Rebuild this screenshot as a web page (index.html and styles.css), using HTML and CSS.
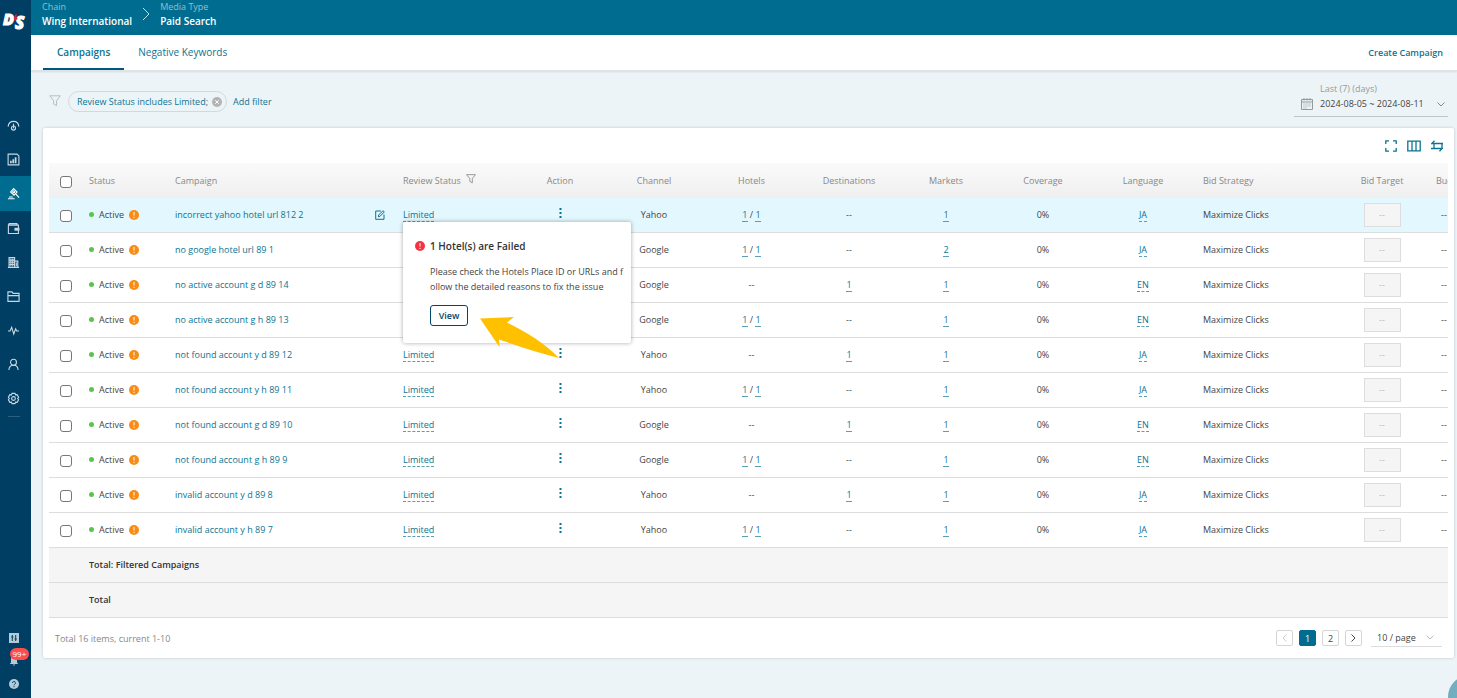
FILE: index.html
```html
<!DOCTYPE html>
<html lang="en">
<head>
  <meta charset="UTF-8">
  <title>Paid Search - Campaigns</title>
  <meta name="viewport" content="width=device-width, initial-scale=1.0">
  <link rel="stylesheet" href="styles.css">
</head>
<body>

  <!-- Sidebar -->
  <nav class="sidebar" aria-label="Main">
    <a class="logo" href="#" aria-label="Home">
      <svg viewBox="0 0 28 24" width="28" height="24">
        <text class="logo-letter" x="2" y="16" font-size="16">D</text>
        <text class="logo-letter" x="14" y="20" font-size="17">S</text>
        <path d="M14 6l1.800-1.200-.4 2.800 1.200 2.400-3 2-.8-2.600z" fill="#e8202f"/>
      </svg>
    </a>

    <div class="side-menu">
      <a class="side-item" href="#" aria-label="Dashboard">
        <svg viewBox="0 0 14 14"><path d="M1.200 8.200C1.500 4.600 4 2.600 7 2.600s5.500 2 5.800 5.600"/><circle cx="7" cy="9.800" r="2.200"/><path d="M7 5v5"/></svg>
      </a>
      <a class="side-item" href="#" aria-label="Reports">
        <svg viewBox="0 0 14 14"><path d="M1.200 1.200h9.600l2 2v9.600H1.200z"/><path class="fill" d="M3.300 8.400h1.800v2.600H3.300zM5.800 6.600h1.800V11H5.800zM8.300 4.500h1.900V11H8.300z"/></svg>
      </a>
      <a class="side-item active" href="#" aria-label="Bidding">
        <svg viewBox="0 0 14 14"><path d="M7.200 1.800l3.600 3.600-3.200 3.400L3.900 5.300z"/><circle cx="7.300" cy="5.200" r="1.100"/><path d="M9.400 7.400l3.600 4M1 12.700h7.200M2.200 10.800h4"/></svg>
      </a>
      <a class="side-item" href="#" aria-label="Budget">
        <svg viewBox="0 0 14 14"><path d="M1.500 3.400v9h10.800v-9zM1.500 3.400l.8-1.600h8.400v1.600"/><path class="fill" d="M8 6.200h5.400v3.200H8z"/></svg>
      </a>
      <a class="side-item" href="#" aria-label="Hotels">
        <svg viewBox="0 0 14 14"><path d="M2.200 12V1.800h6V12M8.200 5.500h3.400V12M1 12.300h12M4.200 3v8M6.200 3v8M2.500 4.400h5.500M2.500 6.800h5.500M2.500 9.200h5.500M10 7v4"/></svg>
      </a>
      <a class="side-item" href="#" aria-label="Files">
        <svg viewBox="0 0 14 14"><path d="M1 12.300V2h4.400l1.200 1.600H13v8.700zM1 6h12"/></svg>
      </a>
      <a class="side-item" href="#" aria-label="Activity">
        <svg viewBox="0 0 14 14"><path d="M1 7.500h2.300L5 3.500l2.300 7.300 2-5.600 1.200 2.300H13"/></svg>
      </a>
      <a class="side-item" href="#" aria-label="Users">
        <svg viewBox="0 0 14 14"><circle cx="7" cy="4.600" r="3.200"/><path d="M2 13c.2-3.300 2-5.200 5-5.200s4.800 1.900 5 5.200"/></svg>
      </a>
      <a class="side-item" href="#" aria-label="Settings">
        <svg viewBox="0 0 14 14"><path d="M5.400 1.500h3.200l.6 1.600 1.700-.2 1.600 2.800L11.500 7l1 1.300-1.600 2.800-1.700-.2-.6 1.600H5.400l-.6-1.600-1.700.2-1.600-2.800L2.500 7l-1-1.300 1.600-2.800 1.700.2z"/><circle cx="7" cy="7" r="2"/></svg>
      </a>
      <span class="side-line"></span>
    </div>

    <div class="side-bottom">
      <a href="#" aria-label="Controls">
        <svg viewBox="0 0 10 10" width="10" height="10"><path d="M0 0h10v10H0z" fill="#b3cad8"/><path d="M3.300 2v6M6.700 2v6M2.200 4h2.200M5.600 6h2.200" stroke="#003e64" fill="none"/></svg>
      </a>
      <a class="bell" href="#" aria-label="Notifications">
        <svg viewBox="0 0 10 10" width="10" height="10"><path d="M5 0a3 3 0 0 0-3 3v3.500L.8 8h8.400L8 6.500V3a3 3 0 0 0-3-3zM3.800 8.600h2.400L5 10z" fill="#b3cad8"/></svg>
        <span class="badge">99+</span>
      </a>
      <a href="#" aria-label="Help">
        <svg viewBox="0 0 10 10" width="10" height="10"><circle cx="5" cy="5" r="5" fill="#b3cad8"/><path d="M3.500 4a1.500 1.500 0 1 1 2.200 1.300c-.5.300-.7.500-.7 1M5 7.200v1" stroke="#003e64" fill="none"/></svg>
      </a>
    </div>
  </nav>

  <div class="page">
    <header class="topbar">
      <div class="crumb"><span class="crumb-label">Chain</span><strong>Wing International</strong></div>
      <svg class="crumb-arrow" viewBox="0 0 8 14" width="8" height="14"><path d="M1 1l6 6-6 6"/></svg>
      <div class="crumb"><span class="crumb-label">Media Type</span><strong>Paid Search</strong></div>
    </header>

    <div class="tabs">
      <a class="tab selected" href="#">Campaigns</a>
      <a class="tab" href="#">Negative Keywords</a>
      <a class="create" href="#">Create Campaign</a>
    </div>

    <main class="content">
      <div class="filters">
        <svg class="funnel" viewBox="0 0 12 12" width="12" height="12"><path d="M.7.8h10.600L7.600 5.600v5L4.600 9V5.600z"/></svg>
        <div class="chip">
          Review Status includes Limited;
          <button class="chip-close" aria-label="Remove filter">
            <svg viewBox="0 0 10 10" width="10" height="10"><circle cx="5" cy="5" r="5" fill="#b4b4b4"/><path d="M3.200 3.200l3.600 3.600M6.800 3.200L3.200 6.800" stroke="#fff"/></svg>
          </button>
        </div>
        <a class="add-filter" href="#">Add filter</a>
        <button class="date-range">
          <svg class="calendar" viewBox="0 0 12 12" width="12" height="12"><path d="M.5 1.500h11v10H.5zM.5 4h11M3 0v2.500M6 0v2.500M9 0v2.500"/><path d="M2.500 6h1M4.500 6h1M6.500 6h1M8.500 6h1M2.500 8h1M4.500 8h1M6.500 8h1M8.500 8h1M2.500 10h1M4.500 10h1"/></svg>
          <span class="date-text"><span class="date-label">Last (7) (days)</span><span>2024-08-05 ~ 2024-08-11</span></span>
          <svg class="caret" viewBox="0 0 8 5" width="8" height="5"><path d="M.5.5L4 4 7.500.5"/></svg>
        </button>
      </div>

      <section class="card">
        <div class="toolbar">
          <button aria-label="Full screen"><svg viewBox="0 0 12 12" width="12" height="12"><path d="M.8 4V.8H4M8 .8h3.200V4M11.200 8v3.200H8M4 11.200H.8V8"/></svg></button>
          <button aria-label="Columns"><svg viewBox="0 0 14 12" width="14" height="12"><path d="M.8 1.200h12.400v9.600H.8zM5 1.200v9.600M9 1.200v9.600"/></svg></button>
          <button aria-label="Row height"><svg viewBox="0 0 12 12" width="12" height="12"><path d="M3.500.8L.8 3.500H12M3 3.500v5M11 3.500v5M0 8.500h11.200l-2.700 2.700"/></svg></button>
        </div>

        <div class="table-wrap">
          <table class="grid">
            <colgroup>
              <col class="c-check"><col class="c-status"><col class="c-campaign"><col class="c-review">
              <col class="c-action"><col class="c-channel"><col class="c-hotels"><col class="c-dest">
              <col class="c-markets"><col class="c-coverage"><col class="c-language"><col class="c-strategy">
              <col class="c-target"><col class="c-budget">
            </colgroup>
            <thead>
              <tr>
                <th class="mid"><input type="checkbox" aria-label="Select all"></th>
                <th>Status</th>
                <th>Campaign</th>
                <th>Review Status <svg class="th-funnel" viewBox="0 0 12 12" width="10" height="10"><path d="M.7.8h10.600L7.600 5.600v5L4.600 9V5.600z"/></svg></th>
                <th class="mid">Action</th>
                <th class="mid">Channel</th>
                <th class="mid">Hotels</th>
                <th class="mid">Destinations</th>
                <th class="mid">Markets</th>
                <th class="mid">Coverage</th>
                <th class="mid">Language</th>
                <th>Bid Strategy</th>
                <th class="mid">Bid Target</th>
                <th>Budget</th>
              </tr>
            </thead>
            <tbody id="rows"></tbody>
            <tfoot>
              <tr><td></td><td colspan="13">Total: Filtered Campaigns</td></tr>
              <tr><td></td><td colspan="13">Total</td></tr>
            </tfoot>
          </table>

          <!-- Review status details -->
          <div class="popover" role="dialog" aria-labelledby="popTitle">
            <h2 class="pop-title" id="popTitle">
              <svg viewBox="0 0 10 10" width="10" height="10"><circle cx="5" cy="5" r="5" fill="#f5333f"/><path d="M5 2v3.500M5 6.800V8" stroke="#fff"/></svg>
              1 Hotel(s) are Failed
            </h2>
            <p class="pop-text">Please check the Hotels Place ID or URLs and follow the detailed reasons to fix the issue</p>
            <button class="view">View</button>
          </div>
          <svg class="pointer" viewBox="0 0 80 42" width="80" height="42"><path d="M0 1.500L34 0 27 5.500C45 14 66 27 79 41C58 36 38 29 19 22.500L19.500 30z" fill="#ffc000"/></svg>
        </div>

        <div class="pager">
          <span class="pager-info">Total 16 items, current 1-10</span>
          <button class="page-btn off" disabled aria-label="Previous page"><svg viewBox="0 0 5 8" width="5" height="8"><path d="M4.500.5L1 4l3.500 3.500"/></svg></button>
          <button class="page-btn current">1</button>
          <button class="page-btn">2</button>
          <button class="page-btn" aria-label="Next page"><svg viewBox="0 0 5 8" width="5" height="8"><path d="M.5.5L4 4 .5 7.500"/></svg></button>
          <div class="size">
            <select aria-label="Page size"><option>10 / page</option><option>20 / page</option></select>
            <svg class="caret" viewBox="0 0 8 5" width="8" height="5"><path d="M.5.5L4 4 7.500.5"/></svg>
          </div>
        </div>
      </section>
    </main>
  </div>

  <button class="chat" aria-label="Chat"></button>

  <script src="script.js"></script>
</body>
</html>
```
FILE: styles.css
```css
* {
  margin: 0;
  padding: 0;
  box-sizing: border-box;
}

body {
  font-family: 'Open Sans', 'Noto Sans', sans-serif;
  font-size: 9px;
  line-height: 15px;
  color: #444;
  background: #edf4f8;
  display: flex;
  min-height: 100vh;
}

a {
  color: #0b7492;
  text-decoration: none;
}

button, select {
  font: inherit;
  color: inherit;
  background: none;
  border: none;
  cursor: pointer;
}

svg {
  fill: none;
  flex: none;
}

/* SIDEBAR */
.sidebar {
  width: 31px;
  flex: none;
  background: #003e64;
  display: flex;
  flex-direction: column;
}

.logo {
  height: 108px;
  padding: 9px 0 0 1px;
}

.logo-letter {
  font-family: 'Open Sans', sans-serif;
  font-weight: 800;
  font-style: italic;
  fill: #fff;
  stroke: #fff;
  stroke-width: 1;
}

.side-menu {
  display: flex;
  flex-direction: column;
}

.side-item {
  height: 34px;
  padding-right: 4px;
  display: flex;
  align-items: center;
  justify-content: center;
}

.side-item.active {
  height: 35px;
  background: #006d90;
}

.side-item svg {
  width: 13px;
  height: 13px;
  stroke: #c8d8e2;
  stroke-width: 1.2;
}

.side-item.active svg {
  stroke: #fff;
}

.side-item .fill {
  fill: #c8d8e2;
  stroke: none;
}

.side-line {
  width: 12px;
  height: 1px;
  margin: 1px 0 0 8px;
  background: #2d607f;
}

.side-bottom {
  margin-top: auto;
  padding: 0 4px 9px 0;
  display: flex;
  flex-direction: column;
  align-items: center;
  gap: 13px;
}

.side-bottom a {
  height: 10px;
  display: flex;
}

.bell {
  position: relative;
}

.badge {
  position: absolute;
  left: 1px;
  top: -8px;
  padding: 0 3px;
  border-radius: 6px;
  background: #ff4d4f;
  color: #fff;
  font-size: 8px;
  line-height: 12px;
}

/* HEADER */
.page {
  flex: 1;
  min-width: 0;
}

.topbar {
  height: 35px;
  padding-left: 11px;
  background: #006d90;
  color: #fff;
  display: flex;
  gap: 10px;
}

.crumb {
  display: flex;
  flex-direction: column;
  font-size: 10px;
  line-height: 14px;
}

.crumb strong {
  font-weight: 600;
}

.crumb-label {
  font-size: 9px;
  color: #8fc0d0;
}

.crumb-arrow {
  margin-top: 7px;
  stroke: #c5dfe8;
}

.tabs {
  height: 36px;
  padding: 0 14px 0 12px;
  background: #fff;
  border-bottom: 1px solid #dde3e6;
  box-shadow: 0 1px 2px rgba(0, 0, 0, 0.1);
  display: flex;
  align-items: stretch;
}

.tab {
  padding: 0 14px;
  font-size: 10px;
  line-height: 35px;
}

.tab.selected {
  font-weight: 600;
  border-bottom: 2px solid #00587f;
}

.create {
  margin-left: auto;
  font-weight: 600;
  line-height: 36px;
}

/* FILTERS */
.content {
  padding: 10px 3px 0 12px;
}

.filters {
  height: 47px;
  padding: 0 6px;
  display: flex;
  align-items: flex-start;
}

.funnel {
  margin-top: 14px;
  stroke: #bbb;
}

.chip {
  height: 21px;
  margin: 10px 6px 0 7px;
  padding: 0 4px 0 8px;
  border: 1px solid #d2d9dc;
  border-radius: 11px;
  color: #0b7492;
  display: flex;
  align-items: center;
  gap: 4px;
}

.chip-close {
  display: flex;
}

.add-filter {
  margin-top: 13px;
}

.date-range {
  width: 154px;
  height: 36px;
  margin-left: auto;
  padding: 0 3px 0 7px;
  border-bottom: 1px solid #c0c5c8;
  text-align: left;
  display: flex;
  gap: 7px;
}

.calendar {
  margin-top: 17px;
  stroke: #999;
}

.date-text {
  display: flex;
  flex-direction: column;
  flex: 1;
}

.date-label {
  color: #999;
}

.caret {
  stroke: #888;
}

.date-range .caret {
  margin-top: 21px;
}

/* CARD */
.card {
  padding: 0 6px;
  background: #fff;
  border-radius: 2px;
  box-shadow: 0 0 3px rgba(0, 0, 0, 0.2);
}

.toolbar {
  height: 35px;
  padding: 0 5px;
  display: flex;
  align-items: center;
  justify-content: flex-end;
  gap: 10px;
}

.toolbar button {
  display: flex;
}

.toolbar svg {
  stroke: #0b7492;
  stroke-width: 1.3;
}

.table-wrap {
  position: relative;
  overflow: hidden;
}

.grid {
  width: 1480px;
  min-width: 100%;
  table-layout: fixed;
  border-collapse: separate;
  border-spacing: 0;
}

.c-check { width: 34px; }
.c-status { width: 86px; }
.c-campaign { width: 228px; }
.c-review { width: 115px; }
.c-action { width: 96px; }
.c-channel { width: 92px; }
.c-hotels { width: 103px; }
.c-dest { width: 92px; }
.c-markets { width: 102px; }
.c-coverage { width: 92px; }
.c-language { width: 108px; }
.c-strategy { width: 137px; }
.c-target { width: 96px; }

.grid th,
.grid td {
  height: 35px;
  padding: 0 6px;
  text-align: left;
  white-space: nowrap;
}

.grid th {
  font-weight: 400;
  color: #888;
}

.grid thead tr {
  background: linear-gradient(#fafafa, #efefef);
}

.grid td {
  padding-bottom: 1px;
  border-bottom: 1px solid #ddd;
}

.grid .mid {
  text-align: center;
}

.grid tfoot td {
  background: #f5f5f5;
  color: #333;
  font-weight: 600;
}

.grid tr.hovered td {
  background: #e3f7fe;
}

.grid input[type="checkbox"] {
  appearance: none;
  width: 12px;
  height: 12px;
  border: 1px solid #777;
  border-radius: 3px;
  background: #fff;
  vertical-align: middle;
}

.th-funnel {
  margin-left: 3px;
  stroke: #888;
}

.status,
.name {
  display: flex;
  align-items: center;
}

.dot {
  width: 5px;
  height: 5px;
  margin-right: 5px;
  border-radius: 50%;
  background: #5ac44c;
}

.warn {
  margin-left: 5px;
}

.name {
  justify-content: space-between;
  padding-right: 6px;
}

.edit {
  display: flex;
}

.edit svg {
  stroke: #0b7492;
}

.dashed {
  border-bottom: 1px dashed #5b9db2;
}

.solid {
  border-bottom: 1px solid #5b9db2;
}

.more svg {
  fill: #0b7492;
}

.target {
  width: 37px;
  height: 24px;
  border: 1px solid #ddd;
  background: #f5f5f5;
  color: #bbb;
  font: inherit;
  text-align: center;
}

.budget {
  padding-left: 5px;
}

/* POPOVER */
.popover {
  position: absolute;
  left: 354px;
  top: 59px;
  width: 228px;
  height: 121px;
  padding: 16px 6px 0 12px;
  background: #fff;
  border-radius: 2px;
  box-shadow: 0 0 4px rgba(0, 0, 0, 0.35);
}

.pop-title {
  font-size: 10px;
  line-height: 16px;
  font-weight: 600;
  color: #333;
  display: flex;
  align-items: center;
  gap: 5px;
}

.pop-text {
  margin: 10px 0 11px 15px;
  word-break: break-all;
}

.view {
  width: 38px;
  height: 21px;
  margin-left: 15px;
  border: 1px solid #00466e;
  border-radius: 3px;
  color: #00466e;
  font-weight: 600;
}

.pointer {
  position: absolute;
  left: 431px;
  top: 154px;
}

/* PAGER */
.pager {
  height: 40px;
  padding: 0 6px;
  display: flex;
  align-items: center;
  gap: 6px;
}

.pager-info {
  margin-right: auto;
  color: #888;
}

.page-btn {
  width: 17px;
  height: 16px;
  border: 1px solid #d5d5d5;
  border-radius: 2px;
  display: flex;
  align-items: center;
  justify-content: center;
}

.page-btn svg {
  stroke: #444;
}

.page-btn.off svg {
  stroke: #ccc;
}

.page-btn.current {
  border-color: #006d90;
  background: #006d90;
  color: #fff;
}

.size {
  width: 71px;
  height: 17px;
  margin-left: 3px;
  padding: 0 8px 0 6px;
  border-bottom: 1px solid #ddd;
  display: flex;
  align-items: center;
}

.size select {
  appearance: none;
  flex: 1;
  min-width: 0;
}

.size .caret {
  stroke: #bbb;
}

/* CHAT */
.chat {
  position: fixed;
  right: -35px;
  bottom: -21px;
  width: 44px;
  height: 44px;
  border-radius: 50%;
  background: #72adc0;
}
```
FILE: script.js
```js
const campaigns = [
  { name: "incorrect yahoo hotel url 812 2", channel: "Yahoo", hotels: true, markets: 1, lang: "JA", hovered: true },
  { name: "no google hotel url 89 1", channel: "Google", hotels: true, markets: 2, lang: "JA" },
  { name: "no active account g d 89 14", channel: "Google", hotels: false, markets: 1, lang: "EN" },
  { name: "no active account g h 89 13", channel: "Google", hotels: true, markets: 1, lang: "EN" },
  { name: "not found account y d 89 12", channel: "Yahoo", hotels: false, markets: 1, lang: "JA" },
  { name: "not found account y h 89 11", channel: "Yahoo", hotels: true, markets: 1, lang: "JA" },
  { name: "not found account g d 89 10", channel: "Google", hotels: false, markets: 1, lang: "EN" },
  { name: "not found account g h 89 9", channel: "Google", hotels: true, markets: 1, lang: "EN" },
  { name: "invalid account y d 89 8", channel: "Yahoo", hotels: false, markets: 1, lang: "JA" },
  { name: "invalid account y h 89 7", channel: "Yahoo", hotels: true, markets: 1, lang: "JA" }
];

const warnIcon = '<svg class="warn" viewBox="0 0 10 10" width="10" height="10"><circle cx="5" cy="5" r="5" fill="#fa8c16"/><path d="M5 2v3.500M5 6.800V8" stroke="#fff"/></svg>';
const editIcon = '<a class="edit" href="#" aria-label="Edit"><svg viewBox="0 0 10 10" width="10" height="10"><path d="M6 1H.700v8.300H9V4.500M3.300 6.800l.4-1.800L8 .700l1.300 1.300L5 6.300z"/></svg></a>';
const moreIcon = '<svg viewBox="0 0 3 11" width="3" height="11"><path d="M.5 1h2v2h-2zM.5 5h2v2h-2zM.5 9h2v2h-2z"/></svg>';

document.getElementById("rows").innerHTML = campaigns.map(c => `
  <tr class="${c.hovered ? "hovered" : ""}">
    <td class="mid"><input type="checkbox" aria-label="Select ${c.name}"></td>
    <td><span class="status"><span class="dot"></span>Active${warnIcon}</span></td>
    <td><span class="name"><a href="#">${c.name}</a>${c.hovered ? editIcon : ""}</span></td>
    <td><a class="dashed" href="#">Limited</a></td>
    <td class="mid"><button class="more" aria-label="Actions">${moreIcon}</button></td>
    <td class="mid">${c.channel}</td>
    <td class="mid">${c.hotels ? '<a class="dashed" href="#">1</a> / <a class="solid" href="#">1</a>' : "--"}</td>
    <td class="mid">${c.hotels ? "--" : '<a class="solid" href="#">1</a>'}</td>
    <td class="mid"><a class="solid" href="#">${c.markets}</a></td>
    <td class="mid">0%</td>
    <td class="mid"><a class="dashed" href="#">${c.lang}</a></td>
    <td>Maximize Clicks</td>
    <td class="mid"><input class="target" type="text" value="--" aria-label="Bid target" disabled></td>
    <td><span class="budget">--</span></td>
  </tr>`).join("");
```
